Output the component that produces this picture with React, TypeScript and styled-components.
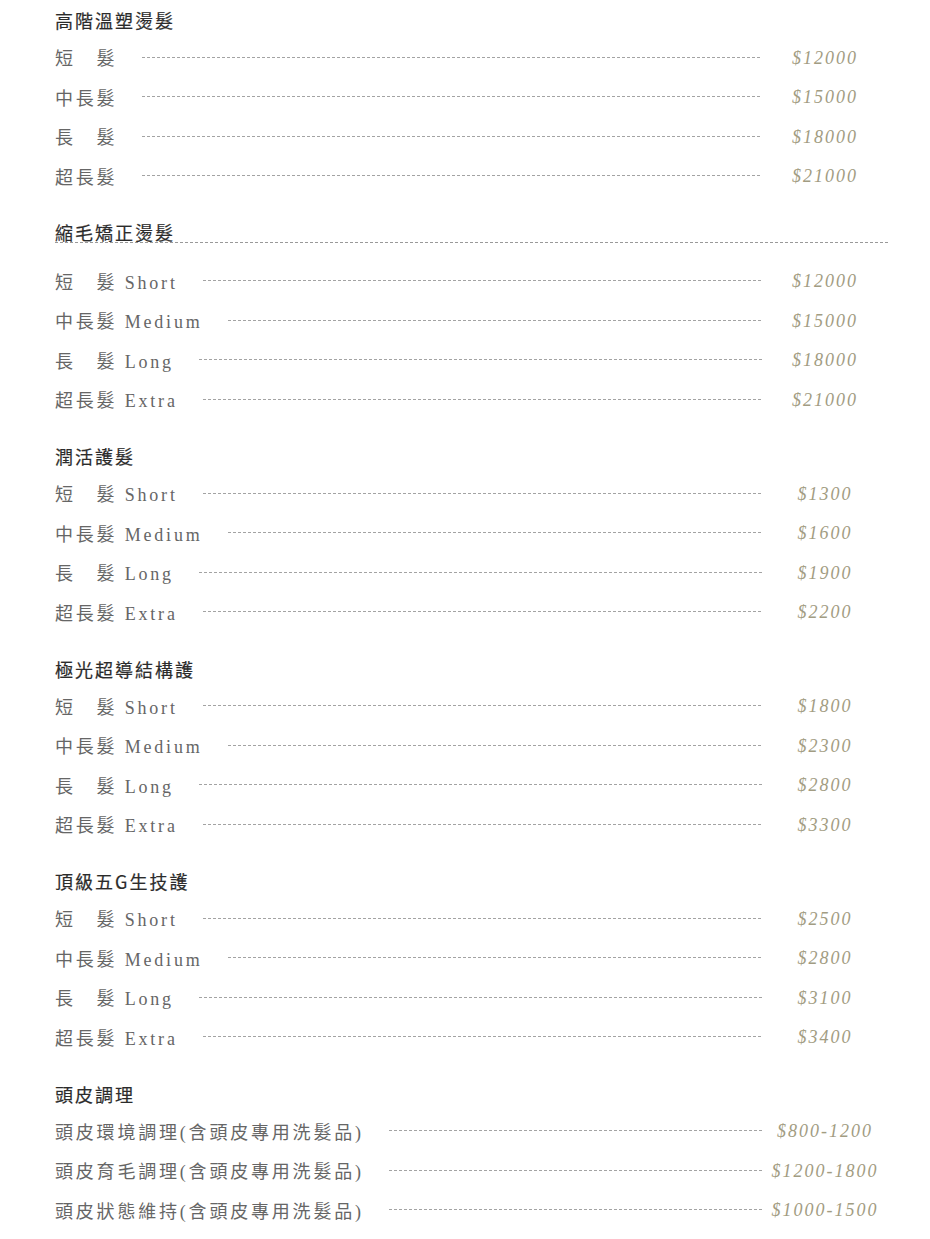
import React from 'react';
import styled, { createGlobalStyle } from 'styled-components';

type Item = { zh: string; en?: string; price: string };
type Section = { title: string; underlined?: boolean; items: Item[] };

const hairEn: Item[] = [
    { zh: '短　髮', en: 'Short', price: '' },
    { zh: '中長髮', en: 'Medium', price: '' },
    { zh: '長　髮', en: 'Long', price: '' },
    { zh: '超長髮', en: 'Extra', price: '' },
];

const withPrices = (prices: string[], plain = false): Item[] =>
    hairEn.map((it, i) => ({
        zh: it.zh,
        en: plain ? undefined : it.en,
        price: prices[i],
    }));

const sections: Section[] = [
    {
        title: '高階溫塑燙髮',
        items: withPrices(['$12000', '$15000', '$18000', '$21000'], true),
    },
    {
        title: '縮毛矯正燙髮',
        underlined: true,
        items: withPrices(['$12000', '$15000', '$18000', '$21000']),
    },
    {
        title: '潤活護髮',
        items: withPrices(['$1300', '$1600', '$1900', '$2200']),
    },
    {
        title: '極光超導結構護',
        items: withPrices(['$1800', '$2300', '$2800', '$3300']),
    },
    {
        title: '頂級五G生技護',
        items: withPrices(['$2500', '$2800', '$3100', '$3400']),
    },
    {
        title: '頭皮調理',
        items: [
            { zh: '頭皮環境調理(含頭皮專用洗髮品)', price: '$800-1200' },
            { zh: '頭皮育毛調理(含頭皮專用洗髮品)', price: '$1200-1800' },
            { zh: '頭皮狀態維持(含頭皮專用洗髮品)', price: '$1000-1500' },
        ],
    },
];

const GlobalStyle = createGlobalStyle`
    body {
        margin: 0;
        background: #fff;
    }
`;

const Page = styled.div`
    width: 833px;
    padding: 3px 0 20px 55px;
`;

const Block = styled.section`
    padding-bottom: 20px;
`;

const Title = styled.h3<{ $underlined?: boolean }>`
    margin: 0;
    font-family: 'Noto Sans CJK TC', 'Noto Sans', sans-serif;
    font-size: 18px;
    font-weight: 400;
    -webkit-text-stroke: 0.2px #333;
    letter-spacing: 2px;
    color: #2b2b2b;
    line-height: ${(p) => (p.$underlined ? '19px' : '34.5px')};
    padding-top: ${(p) => (p.$underlined ? '7px' : '0')};
    margin-bottom: ${(p) => (p.$underlined ? '18.5px' : '0')};
    border-bottom: ${(p) => (p.$underlined ? '1px dashed #999' : 'none')};
`;

const Row = styled.div`
    display: flex;
    align-items: center;
    height: 39.5px;
`;

const Label = styled.span`
    font-family: 'Liberation Serif', 'Noto Sans CJK TC', serif;
    font-size: 18px;
    letter-spacing: 2.8px;
    color: #666;
    white-space: nowrap;
`;

const Leader = styled.span`
    flex: 1;
    height: 1px;
    margin-left: 25px;
    background: repeating-linear-gradient(
        to right,
        #a3a3a3 0 3px,
        transparent 3px 5px
    );
`;

const Price = styled.span`
    width: 126px;
    padding-top: 2px;
    text-align: center;
    font-family: 'Liberation Serif', serif;
    font-style: italic;
    font-size: 18px;
    letter-spacing: 2px;
    color: #a29c82;
    white-space: nowrap;
`;

export default function App() {
    return (
        <Page>
            <GlobalStyle />
            {sections.map((s) => (
                <Block key={s.title}>
                    <Title $underlined={s.underlined}>{s.title}</Title>
                    {s.items.map((it) => (
                        <Row key={it.zh}>
                            <Label>
                                {it.zh}
                                {it.en ? ` ${it.en}` : ''}
                            </Label>
                            <Leader />
                            <Price>{it.price}</Price>
                        </Row>
                    ))}
                </Block>
            ))}
        </Page>
    );
}
